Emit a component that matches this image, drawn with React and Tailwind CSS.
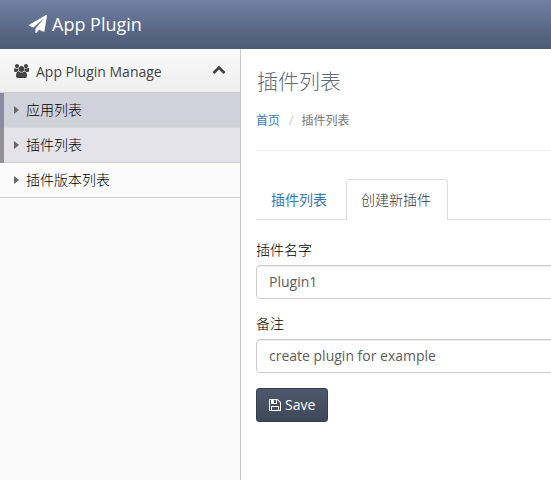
function Icon({ path, viewBox = "0 0 1792 1792", className }) {
  return (
    <svg viewBox={viewBox} fill="currentColor" className={"shrink-0 " + className} aria-hidden="true">
      <path d={path} />
    </svg>
  );
}

const PLANE =
  "M1764 11q33 24 27 64l-256 1536q-5 29-32 45-14 8-31 8-11 0-24-5l-453-185-242 295q-18 23-49 23-13 0-22-4-19-7-30.500-23.500t-11.500-36.500v-349l864-1059-1069 925-395-162q-37-14-40-55-2-40 32-59l1664-960q15-9 32-9 20 0 36 11z";
const USERS =
  "M529 896q-162 5-265 128h-134q-82 0-138-40.500t-56-118.500q0-353 124-353 6 0 43.500 21t97.500 42.500 119 21.500q67 0 133-23-5 37-5 66 0 159 90 293zm1071 637q0 120-73 189.500t-194 69.500h-874q-121 0-194-69.500t-73-189.500q0-53 3.500-103.500t14-109 26.500-108.500 43-97.500 62-81 85.500-53.500 111.500-20q10 0 43 21.500t73 48 107 48 135 21.500 135-21.500 107-48 73-48 43-21.500q61 0 111.500 20t85.500 53.500 62 81 43 97.500 26.500 108.500 14 109 3.500 103.500zm-1024-1277q0 106-75 181t-181 75-181-75-75-181 75-181 181-75 181 75 75 181zm704 384q0 159-112.500 271.500t-271.500 112.500-271.500-112.500-112.500-271.500 112.500-271.500 271.500-112.500 271.500 112.500 112.500 271.500zm576 225q0 78-56 118.500t-138 40.500h-134q-103-123-265-128 90-134 90-293 0-29-5-66 66 23 133 23 59 0 119-21.500t97.500-42.500 43.500-21q124 0 124 353zm-128-609q0 106-75 181t-181 75-181-75-75-181 75-181 181-75 181 75 75 181z";
const CHEVRON_UP =
  "M1683 1331l-166 165q-19 19-45 19t-45-19l-531-531-531 531q-19 19-45 19t-45-19l-166-165q-19-19-19-45.500t19-45.500l742-741q19-19 45-19t45 19l742 741q19 19 19 45.500t-19 45.500z";
const FLOPPY =
  "M512 1536h768v-384h-768v384zm896 0h128v-896q0-14-10-38.500t-20-34.500l-281-281q-10-10-34-20t-39-10v416q0 40-28 68t-68 28h-576q-40 0-68-28t-28-68v-416h-128v1280h128v-416q0-40 28-68t68-28h832q40 0 68 28t28 68v416zm-384-928v-320q0-13-9.500-22.500t-22.500-9.500h-192q-13 0-22.500 9.500t-9.500 22.500v320q0 13 9.500 22.500t22.500 9.500h192q13 0 22.500-9.500t9.500-22.500zm640 32v928q0 40-28 68t-68 28h-1344q-40 0-68-28t-28-68v-1344q0-40 28-68t68-28h928q40 0 88 20t76 48l280 280q28 28 48 76t20 88z";

const MENU = [
  { label: "应用列表", bar: "bg-[#8c8aa6]", row: "bg-[#d1d1db] border-b-[#d6d6dc]" },
  { label: "插件列表", bar: "bg-[#929095]", row: "bg-[#e4e3e9] border-b-[#cacaca]" },
  { label: "插件版本列表", bar: "", row: "bg-[#fbfbfb] border-b-[#cacaca]" },
];

function Sidebar() {
  return (
    <aside className="w-[241px] shrink-0 border-r border-[#c9c9c9] bg-[#fafafa]">
      <div className="flex h-11 items-center border-b border-[#c9c9c9] bg-linear-to-b from-[#fafafa] to-[#efefef] px-3.5 text-[#444]">
        <Icon path={USERS} viewBox="-64 0 1920 1792" className="mt-px h-[14px] w-[15px]" />
        <span className="ml-[7px] grow whitespace-nowrap pt-0.5">App Plugin Manage</span>
        <Icon path={CHEVRON_UP} className="mb-[3px] h-[14px] w-[14px]" />
      </div>
      <nav>
        {MENU.map((m) => (
          <a key={m.label} className="flex h-[35px] font-light text-black">
            {m.bar && <span className={"w-1 " + m.bar} />}
            <span className={"flex grow items-center border-b " + (m.bar ? "pl-2.5 " : "pl-3.5 ") + m.row}>
              <span className="mr-[7px] h-0 w-0 border-y-4 border-l-[5px] border-y-transparent border-l-[#6b6469]" />
              {m.label}
            </span>
          </a>
        ))}
      </nav>
    </aside>
  );
}

function Field({ label, value }) {
  return (
    <label className="mb-[15px] block">
      <span className="mb-[5px] block font-light text-black">{label}</span>
      <input
        defaultValue={value}
        className="block h-[34px] w-full rounded border border-[#ccc] bg-white px-3 pb-[7px] pt-[5px] text-[#5c5c5c] shadow-[inset_0_1px_1px_rgba(0,0,0,0.075)] outline-none"
      />
    </label>
  );
}

export default function App() {
  return (
    <div className="flex h-screen flex-col overflow-hidden bg-white font-['Open_Sans','Noto_Sans_CJK_SC',sans-serif] text-[14px] leading-5">
      <header className="flex h-[49px] shrink-0 items-center bg-linear-to-b from-[#7080a3] to-[#4d5a75] pb-px pl-[29px] text-[18px] text-white">
        <Icon path={PLANE} className="h-[18px] w-[18px]" />
        <span className="ml-[5px]">App Plugin</span>
      </header>
      <div className="flex min-h-0 grow">
        <Sidebar />
        <main className="w-[600px] shrink-0 pl-[15px] pt-4">
          <h1 className="pl-px text-[21px] font-light leading-8 text-[#5f6b7a]">插件列表</h1>
          <div className="mt-[14px] flex h-5 items-center text-[12px]">
            <a className="text-[#337ab7]">首页</a>
            <span className="pl-[9px] pr-2 text-[#ccc]">/</span>
            <span className="text-[#777]">插件列表</span>
          </div>
          <hr className="mt-[19px] border-[#eee]" />
          <div className="mt-7 flex h-[41px]">
            <div className="w-[90px] border-b border-[#ddd] pl-[15px] pt-[11px] text-[#337ab7]">插件列表</div>
            <div className="w-[102px] rounded-t border border-b-0 border-[#ddd] pl-[14px] pt-2.5 font-light text-[#333]">创建新插件</div>
            <div className="grow border-b border-[#ddd]" />
          </div>
          <form className="pt-5">
            <Field label="插件名字" value="Plugin1" />
            <Field label="备注" value="create plugin for example" />
            <button
              type="button"
              className="flex h-[34px] w-[72px] items-center rounded-[3px] border border-[#353d4b] bg-linear-to-b from-[#4d586d] to-[#3f4859] pl-[11px] text-white"
            >
              <Icon path={FLOPPY} className="h-[14px] w-[14px]" />
              <span className="ml-[3px]">Save</span>
            </button>
          </form>
        </main>
      </div>
    </div>
  );
}
